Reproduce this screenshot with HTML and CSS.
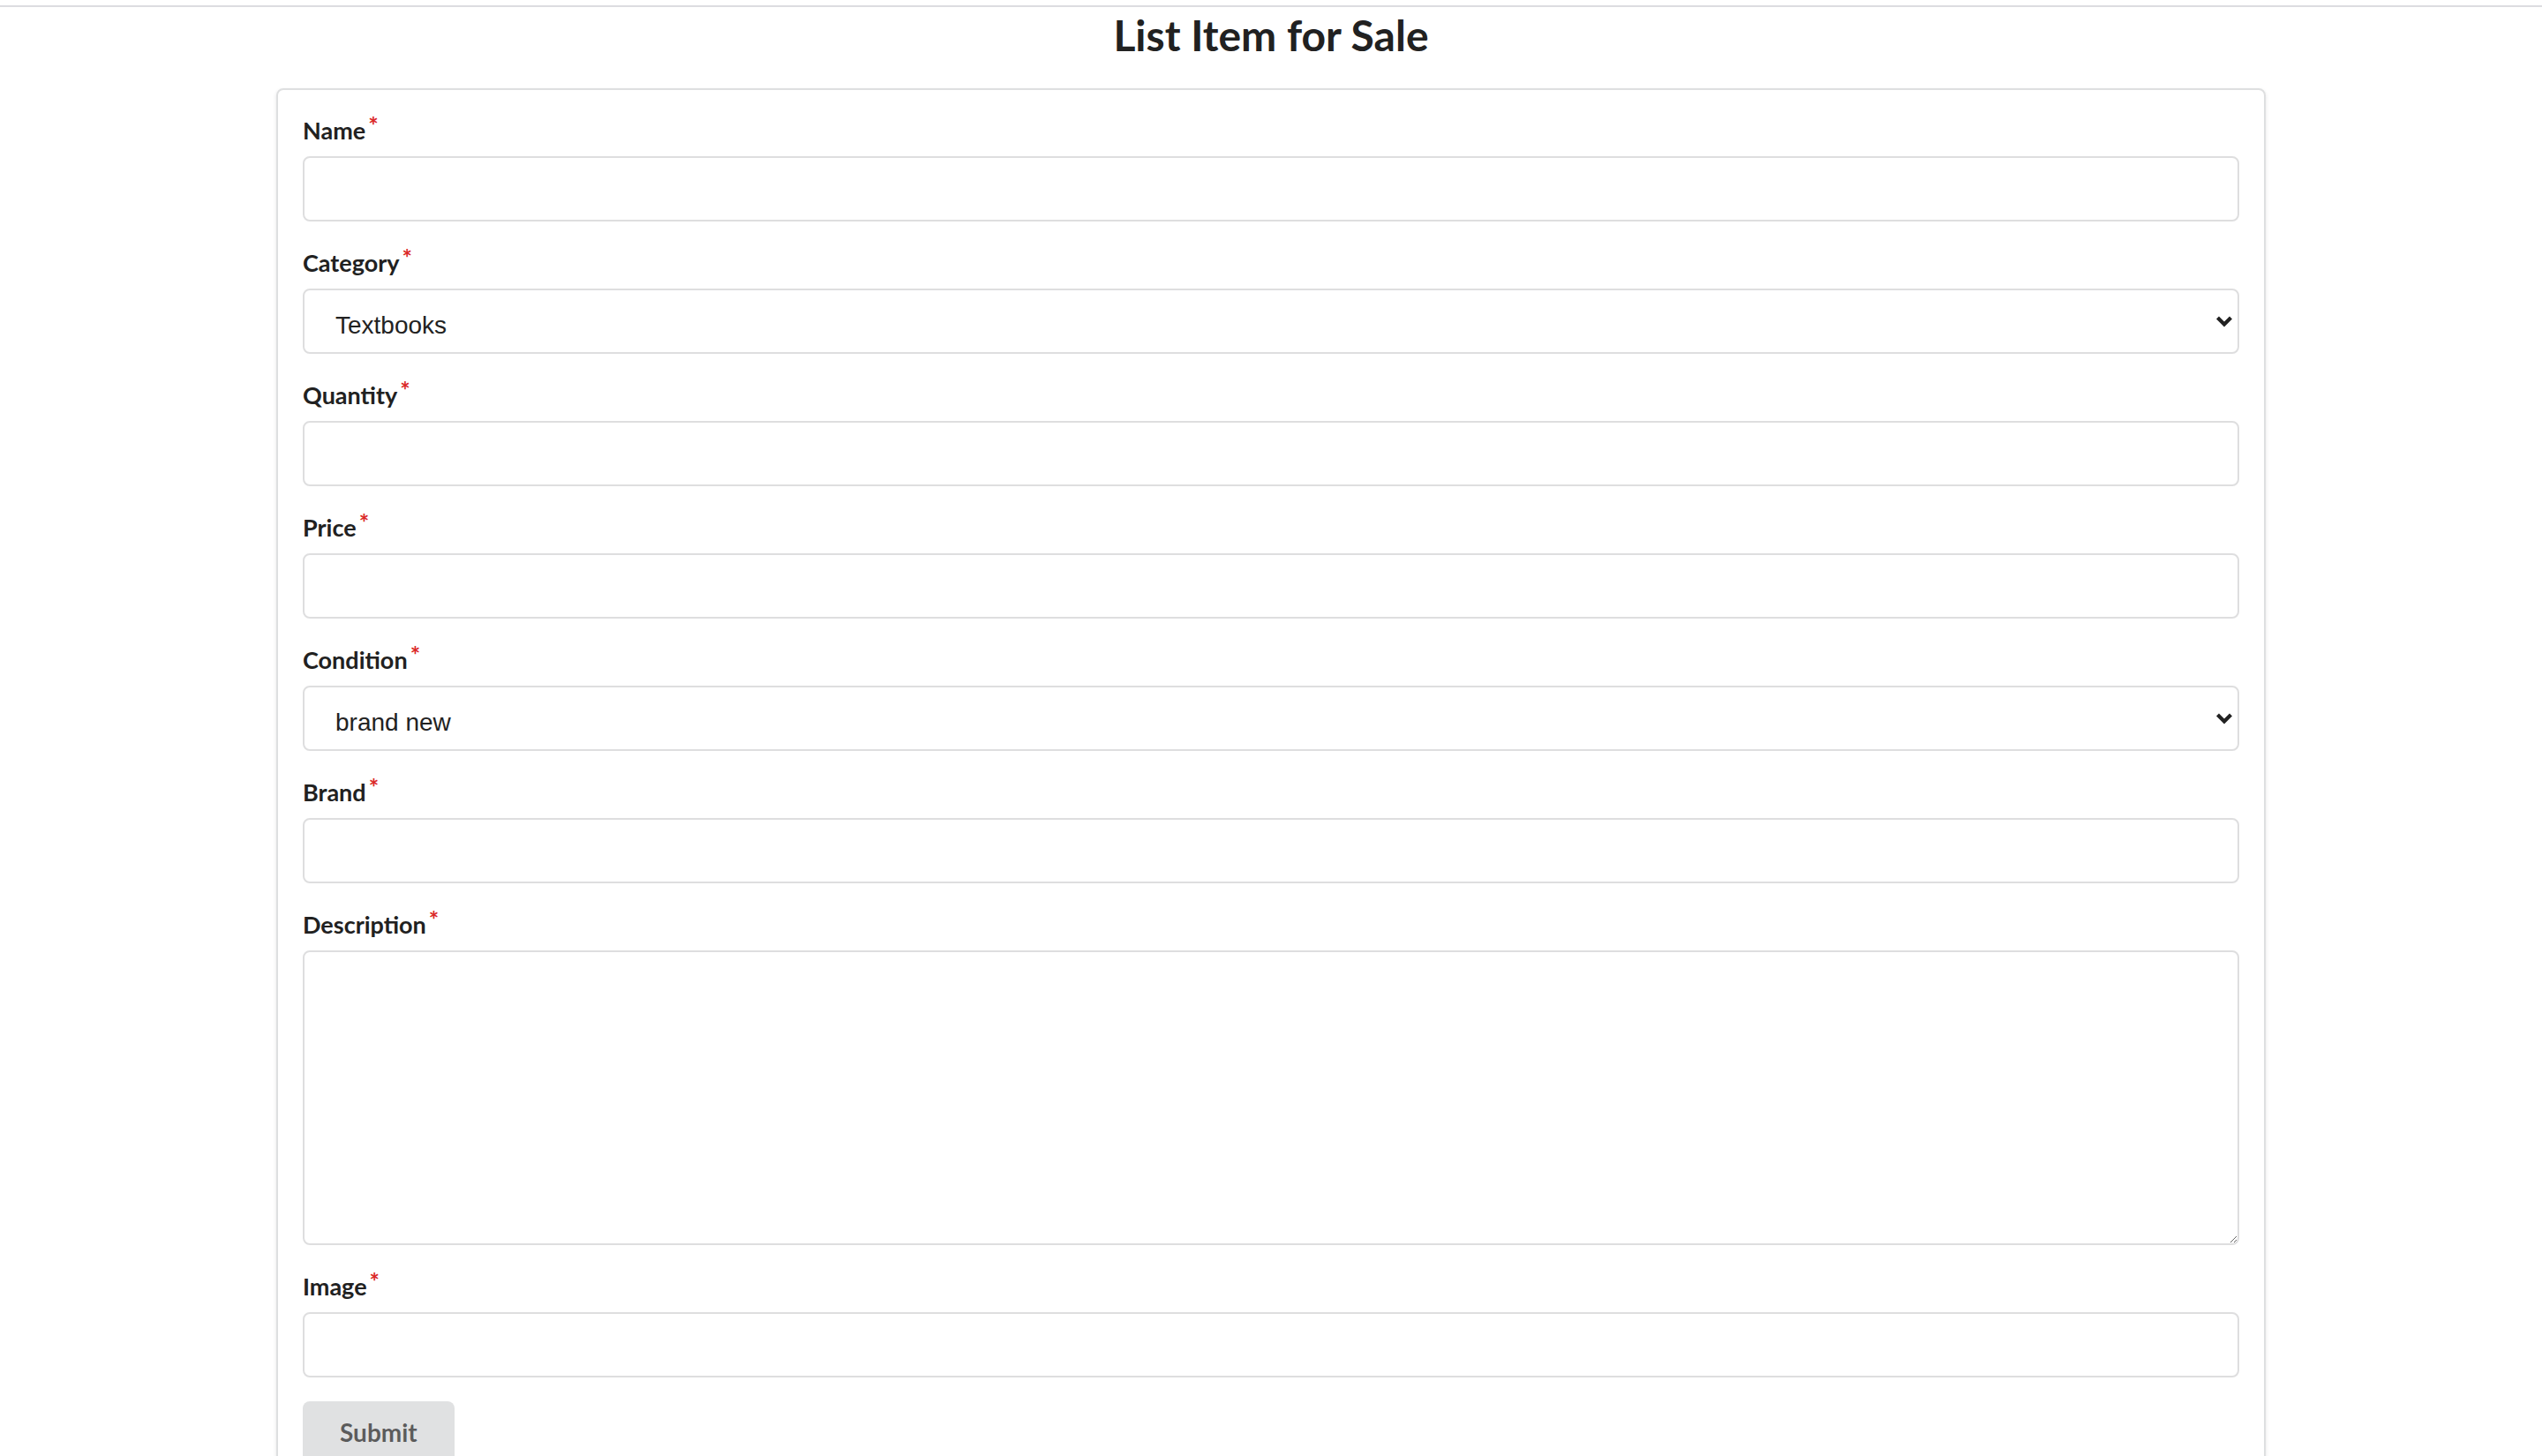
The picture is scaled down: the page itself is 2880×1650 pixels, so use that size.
FILE: index.html
```html
<!DOCTYPE html>
<html lang="en">
<head>
<meta charset="utf-8">
<title>List Item for Sale</title>
<link rel="stylesheet" href="styles.css">
</head>
<body>
<div class="topbar"></div>
<h1 class="page-title">List Item for Sale</h1>
<div class="segment">
  <form class="form">
    <div class="field">
      <label class="label required">Name</label>
      <input class="control" type="text">
    </div>
    <div class="field">
      <label class="label required">Category</label>
      <div class="select-wrap">
        <select class="control select">
          <option>Textbooks</option>
          <option>Electronics</option>
          <option>Furniture</option>
          <option>Clothing</option>
        </select>
        <svg class="chevron" width="20" height="14" viewBox="0 0 20 14"><polyline points="2.5,3 10,10.5 17.5,3" fill="none" stroke="#222" stroke-width="4.2" stroke-linejoin="miter"/></svg>
      </div>
    </div>
    <div class="field">
      <label class="label required">Quantity</label>
      <input class="control" type="text">
    </div>
    <div class="field">
      <label class="label required">Price</label>
      <input class="control" type="text">
    </div>
    <div class="field">
      <label class="label required">Condition</label>
      <div class="select-wrap">
        <select class="control select">
          <option>brand new</option>
          <option>like new</option>
          <option>used</option>
        </select>
        <svg class="chevron" width="20" height="14" viewBox="0 0 20 14"><polyline points="2.5,3 10,10.5 17.5,3" fill="none" stroke="#222" stroke-width="4.2" stroke-linejoin="miter"/></svg>
      </div>
    </div>
    <div class="field">
      <label class="label required">Brand</label>
      <input class="control" type="text">
    </div>
    <div class="field">
      <label class="label required">Description</label>
      <textarea class="control textarea"></textarea>
    </div>
    <div class="field">
      <label class="label required">Image</label>
      <input class="control" type="text">
    </div>
    <button class="button" type="button">Submit</button>
  </form>
</div>
</body>
</html>
```

FILE: styles.css
```css
html, body {
  margin: 0;
  padding: 0;
  background: #ffffff;
}

body {
  font-family: Lato, "Open Sans", "Liberation Sans", sans-serif;
  color: rgba(0, 0, 0, 0.87);
}

.topbar {
  height: 6px;
  border-bottom: 2px solid #dcdce0;
}

.page-title {
  margin: 0 0 28px 0;
  font-family: Lato, sans-serif;
  font-weight: 700;
  font-size: 48px;
  line-height: 64px;
  text-align: center;
  color: #212121;
}

.segment {
  width: 2254px;
  box-sizing: border-box;
  margin: 0 auto;
  border: 2px solid #dedfe0;
  border-radius: 8px;
  box-shadow: 0 2px 4px 0 rgba(34, 36, 38, 0.12);
  padding: 26px 28px 40px 28px;
}

.form {
  display: flex;
  flex-direction: column;
}

.field {
  display: flex;
  flex-direction: column;
  margin-bottom: 27px;
}

.label {
  display: block;
  font-family: Lato, sans-serif;
  font-weight: 700;
  font-size: 27px;
  line-height: 40px;
  height: 40px;
  margin-bottom: 9px;
  color: #212121;
}

.label.required::after {
  content: "*";
  color: #db2828;
  margin-left: 3px;
  line-height: 0;
  vertical-align: 6px;
}

.control {
  display: block;
  width: 100%;
  box-sizing: border-box;
  height: 74px;
  border: 2px solid #dededf;
  border-radius: 8px;
  background: #ffffff;
  font-family: "Liberation Sans", Arial, sans-serif;
  font-size: 28px;
  color: #222222;
  padding: 0 28px;
  outline: none;
  margin: 0;
}

.select-wrap {
  position: relative;
}

.select {
  -webkit-appearance: none;
  appearance: none;
  padding: 8px 60px 0 35px;
}

.chevron {
  position: absolute;
  right: 7px;
  top: 30px;
  pointer-events: none;
}

.textarea {
  height: 334px;
  padding: 19px 28px;
  resize: both;
}

.button {
  align-self: flex-start;
  margin-top: 0;
  border: none;
  border-radius: 8px;
  background: #e0e1e2;
  color: rgba(0, 0, 0, 0.6);
  font-family: Lato, sans-serif;
  font-weight: 700;
  font-size: 28px;
  line-height: 28px;
  padding: 21px 42px;
  cursor: pointer;
}
```
